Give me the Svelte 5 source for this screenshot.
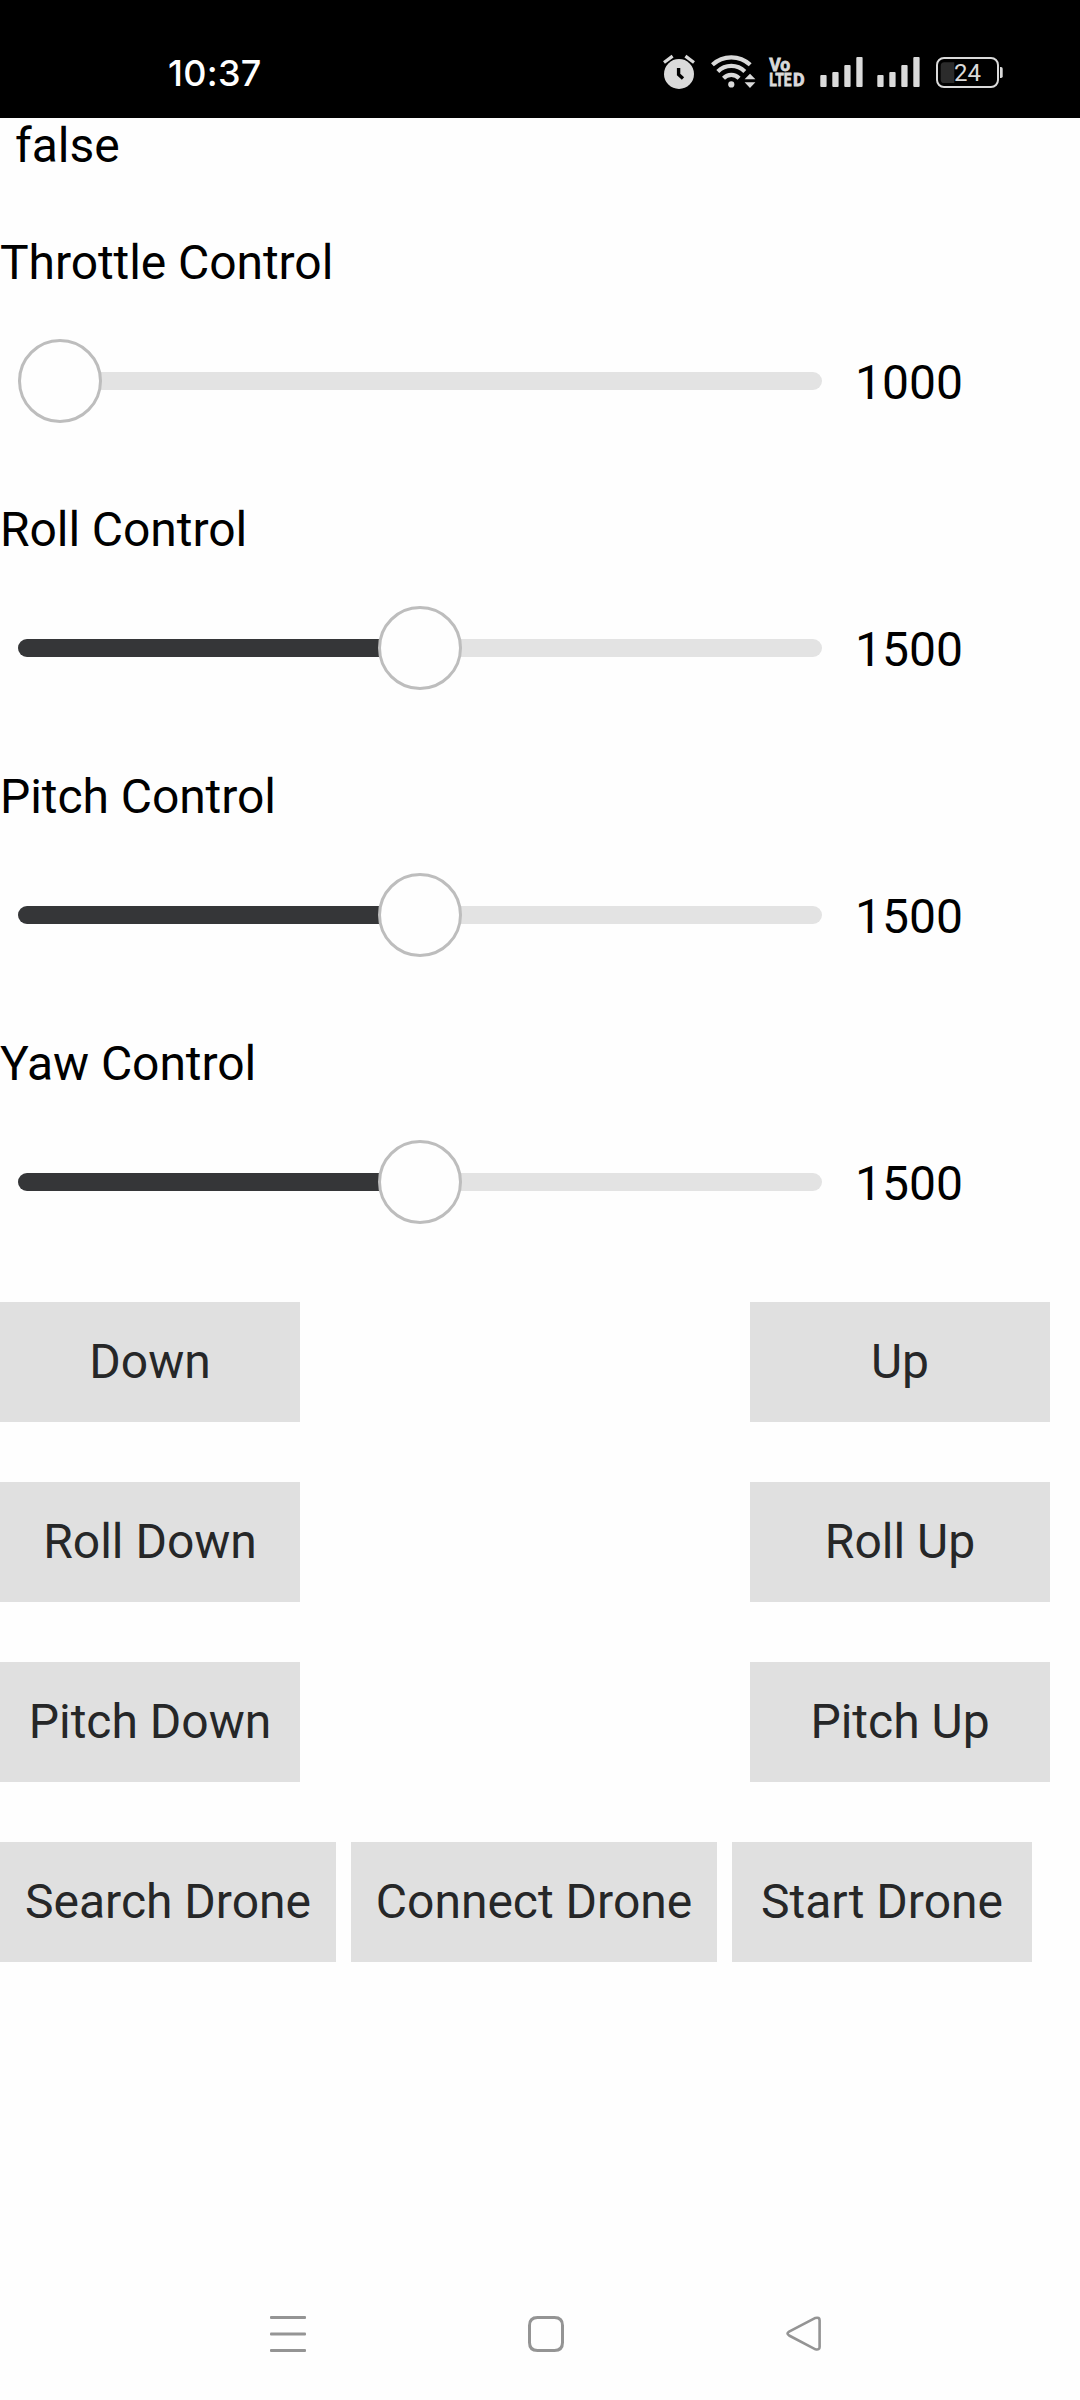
<script>
  let controls = $state([
    { name: 'Throttle Control', value: 1000 },
    { name: 'Roll Control', value: 1500 },
    { name: 'Pitch Control', value: 1500 },
    { name: 'Yaw Control', value: 1500 }
  ]);

  const pairs = [
    ['Down', 'Up'],
    ['Roll Down', 'Roll Up'],
    ['Pitch Down', 'Pitch Up']
  ];

  const actions = [
    { label: 'Search Drone', size: 'medium' },
    { label: 'Connect Drone', size: 'large' },
    { label: 'Start Drone', size: 'small' }
  ];

  const percent = (value) => (value - 1000) / 10;
</script>

<div class="screen">
  <header class="status">
    <span class="time">10:37</span>
    <div class="icons">
      <svg class="alarm" width="32" height="36" viewBox="663 54 32 36">
        <circle cx="679" cy="74" r="15" fill="#dadada" />
        <path d="M664 62.5l8.6-6.4M694 62.5l-8.6-6.4" stroke="#dadada" stroke-width="3.2" />
        <path d="M678.6 68v6.6l4.4 4" fill="none" stroke="#000" stroke-width="3.4" />
      </svg>
      <svg class="wifi" width="46" height="36" viewBox="711 54 46 36">
        <g fill="none" stroke="#dadada" stroke-width="4.2">
          <path d="M712.4 64.8a27.6 27.6 0 0 1 37.8 0" />
          <path d="M717.8 71.4a19.3 19.3 0 0 1 27 0" />
          <path d="M723.5 78.2a11 11 0 0 1 15.6 0" />
        </g>
        <circle cx="731.3" cy="84.4" r="3.1" fill="#dadada" />
        <path d="M744.6 79.2l5.4-5.4 5.4 5.4zM744.6 82.2h10.8l-5.4 5.8z" fill="#dadada" />
      </svg>
      <svg class="volte" width="40" height="44" viewBox="767 51 40 44">
        <g fill="#dadada" stroke="#dadada" stroke-width=".8" font-family="Roboto, sans-serif" font-weight="700">
          <text x="769.2" y="71" font-size="19" textLength="21" lengthAdjust="spacingAndGlyphs">Vo</text>
          <text x="769.2" y="86.4" font-size="18.5" textLength="22.4" lengthAdjust="spacingAndGlyphs">LTE</text>
          <text x="793" y="86.4" font-size="18.5" textLength="11.6" lengthAdjust="spacingAndGlyphs">D</text>
        </g>
      </svg>
      {#each ['first', 'second'] as slot}
        <svg class="signal {slot}" width="43" height="30" viewBox="0 0 43 30" fill="#dadada">
          <rect x="0.3" y="18" width="6.3" height="12" rx="1" />
          <rect x="12.3" y="15" width="6.3" height="15" rx="1" />
          <rect x="24.3" y="8" width="6.3" height="22" rx="1" />
          <rect x="36.3" y="0" width="6.3" height="30" rx="1" />
        </svg>
      {/each}
      <svg class="battery" width="68" height="31" viewBox="936 57 68 31">
        <rect x="937" y="58" width="61" height="29" rx="7" fill="none" stroke="#dadada" stroke-width="2" />
        <path d="M954.3 62.3v20.7h-10a3.6 3.6 0 0 1-3.6-3.6v-13.5a3.6 3.6 0 0 1 3.6-3.6z" fill="#2b2b2b" />
        <path d="M1000 67h1a1.7 1.7 0 0 1 1.7 1.7v7.6a1.7 1.7 0 0 1-1.7 1.7h-1z" fill="#dadada" />
        <text x="967.5" y="81" font-family="Roboto, sans-serif" font-size="24" text-anchor="middle" fill="#dadada">24</text>
      </svg>
    </div>
  </header>

  <main>
    <p class="state">false</p>

    {#each controls as control}
      <section class="control">
        <h2>{control.name}</h2>
        <div class="row">
          <div class="slider" role="slider" tabindex="-1" aria-label={control.name} aria-valuemin="1000" aria-valuemax="2000" aria-valuenow={control.value}>
            <div class="fill" style:width="{percent(control.value)}%"></div>
            <div class="travel">
              <div class="thumb" style:left="{percent(control.value)}%"></div>
            </div>
          </div>
          <output>{control.value}</output>
        </div>
      </section>
    {/each}

    <div class="pairs">
      {#each pairs as [down, up]}
        <div class="pair">
          <button class="small">{down}</button>
          <button class="small">{up}</button>
        </div>
      {/each}
    </div>

    <div class="actions">
      {#each actions as action}
        <button class={action.size}>{action.label}</button>
      {/each}
    </div>
  </main>

  <nav>
    <svg width="36" height="36" viewBox="0 0 36 36" fill="#949494">
      <rect y="0" width="36" height="3" rx="1" />
      <rect y="16.5" width="36" height="3" rx="1" />
      <rect y="33" width="36" height="3" rx="1" />
    </svg>
    <svg width="36" height="36" viewBox="0 0 36 36">
      <path d="M9.5 1.5h17q8 0 8 8v17q0 8-8 8h-17q-8 0-8-8v-17q0-8 8-8z" fill="none" stroke="#949494" stroke-width="3" />
    </svg>
    <svg width="36" height="36" viewBox="0 0 36 36">
      <path d="M30.4 1.9L4.1 15.7q-3.2 1.9 0 3.8L30.4 33.3q4.2 1 4.2-2.4V4.3q0-3.4-4.2-2.4z" fill="none" stroke="#949494" stroke-width="2.6" />
    </svg>
  </nav>
</div>

<style>
  :global(body) {
    margin: 0;
    background: #fefefe;
  }

  .screen {
    display: flex;
    flex-direction: column;
    width: 1080px;
    height: 2400px;
    background: #fefefe;
    color: #000;
    font: 48px/56px Roboto, sans-serif;
  }

  .status {
    box-sizing: border-box;
    display: flex;
    justify-content: space-between;
    height: 118px;
    padding: 0 76px 0 168px;
    background: #000;
  }

  .time {
    padding-top: 51px;
    color: #fff;
    font: 500 36px/44px Inter, sans-serif;
    letter-spacing: 0.3px;
  }

  .icons {
    display: flex;
    align-items: flex-start;
    padding-top: 51px;
  }

  .icons svg { display: block; }
  .alarm { margin-top: 3px; }
  .wifi { margin: 3px 0 0 16px; }
  .volte { margin-left: 10px; }
  .signal { margin-top: 6px; }
  .first { margin-left: 13px; }
  .second { margin-left: 14px; }
  .battery { margin: 6px 0 0 16px; }

  main { flex: 1; }

  .state {
    height: 116px;
    margin: 0;
    padding-left: 15px;
  }

  .control { height: 267px; }

  h2 {
    box-sizing: border-box;
    margin: 0;
    height: 57px;
    padding-top: 1px;
    font: inherit;
    letter-spacing: -0.07px;
  }

  .row {
    display: flex;
    align-items: center;
    gap: 33px;
    height: 180px;
    padding-left: 18px;
  }

  .slider {
    position: relative;
    width: 804px;
    height: 18px;
    border-radius: 9px;
    background: #e3e3e3;
  }

  .fill {
    height: 100%;
    border-radius: 9px 0 0 9px;
    background: #353638;
  }

  .travel {
    position: absolute;
    top: -33px;
    left: 0;
    right: 84px;
  }

  .thumb {
    position: absolute;
    box-sizing: border-box;
    width: 84px;
    height: 84px;
    border: 3px solid #bdbdbd;
    border-radius: 50%;
    background: #fefefe;
  }

  output { padding-top: 3px; }

  .pairs {
    display: flex;
    flex-direction: column;
    gap: 60px;
  }

  .pair {
    display: flex;
    justify-content: space-between;
    width: 1050px;
  }

  .actions {
    display: flex;
    gap: 15px;
    margin-top: 60px;
  }

  button {
    height: 120px;
    padding: 0;
    border: 0;
    background: #e0e0e0;
    color: #262728;
    font: inherit;
    white-space: nowrap;
  }

  .small { width: 300px; }
  .medium { width: 336px; }
  .large { width: 366px; }

  nav {
    display: flex;
    justify-content: space-between;
    padding: 0 259px 48px 270px;
  }

  nav svg { display: block; }
</style>
